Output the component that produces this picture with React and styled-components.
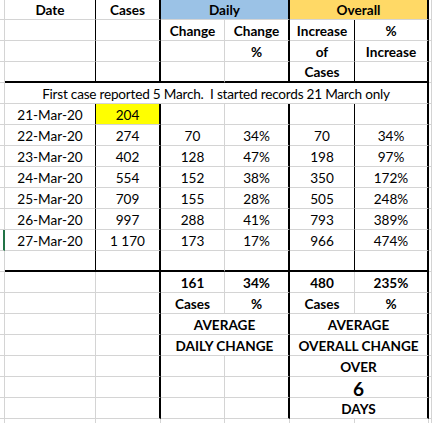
import React from 'react';
import styled, { createGlobalStyle } from 'styled-components';

// Sheet look

const GRID = '#d4d4d4';

const lines = {
    grid: `1px solid ${GRID}`,
    thin: '1px solid #000',
    thick: '2px solid #000',
    sel: '2px solid #217346',
    none: 'none',
};

const GlobalStyle = createGlobalStyle`
    html, body {
        margin: 0;
        padding: 0;
        background: #ffffff;
        overflow: hidden;
    }
`;

const Page = styled.div`
    width: 432px;
    height: 423px;
    overflow: hidden;
    background: #ffffff;
    font-family: Lato, "Liberation Sans", sans-serif;
    font-size: 13.6px;
    color: #000;
`;

const Sheet = styled.div`
    display: grid;
    grid-template-columns: 5px 91px 65px 64px 65px 65px 74px 3px;
    grid-auto-rows: 21px;
    margin-top: -1px;
`;

const Cell = styled.div`
    box-sizing: border-box;
    display: flex;
    justify-content: center;
    white-space: pre;
    overflow: visible;
    grid-column: span ${p => p.$span || 1};
    border-right: ${p => lines[p.$r || 'grid']};
    border-bottom: ${p => lines[p.$b || 'grid']};
    background: ${p => p.$bg || 'transparent'};
    font-weight: ${p => (p.$bold ? 700 : 400)};
    font-size: ${p => (p.$big ? '19px' : 'inherit')};
    letter-spacing: ${p => (p.$tight ? '-0.22px' : 'normal')};
    padding-top: ${p => (p.$big ? '0' : '1px')};
    align-items: ${p => (p.$big ? 'flex-start' : 'center')};
`;

const HEAD_R = ['grid', 'thin', 'thick', 'grid', 'thick', 'thin', 'thick', 'grid'];
const STAT_R = ['grid', 'grid', 'thick', 'grid', 'thick', 'grid', 'thick', 'grid'];

const days = [
    ['21-Mar-20', '204', '', '', '', ''],
    ['22-Mar-20', '274', '70', '34%', '70', '34%'],
    ['23-Mar-20', '402', '128', '47%', '198', '97%'],
    ['24-Mar-20', '554', '152', '38%', '350', '172%'],
    ['25-Mar-20', '709', '155', '28%', '505', '248%'],
    ['26-Mar-20', '997', '288', '41%', '793', '389%'],
    ['27-Mar-20', '1 170', '173', '17%', '966', '474%'],
    ['', '', '', '', '', ''],
];

function Row({ values, right = HEAD_R, bottom, bold, first, edge }) {
    return (
        <>
            <Cell $r={edge || 'grid'} />
            {values.map((v, i) => (
                <Cell key={i} $r={right[i + 1]} $b={bottom || 'grid'} $bold={bold}
                    $bg={first && i === 1 ? '#ffff00' : undefined}>
                    {v}
                </Cell>
            ))}
            <Cell />
        </>
    );
}

function App() {
    return (
        <Page>
            <GlobalStyle />
            <Sheet>
                {/* header */}
                <Cell />
                <Cell $r="thin" $bold>Date</Cell>
                <Cell $r="thick" $bold>Cases</Cell>
                <Cell $span={2} $r="thick" $bg="#9bc2e6" $bold>Daily</Cell>
                <Cell $span={2} $r="thick" $bg="#ffd966" $bold>Overall</Cell>
                <Cell />

                <Row values={['', '', 'Change', 'Change', 'Increase', '%']} bold />
                <Row values={['', '', '', '%', 'of', 'Increase']} bold />
                <Row values={['', '', '', '', 'Cases', '']} bold bottom="thick" />

                <Cell />
                <Cell $span={6} $r="thick" $tight>First case reported 5 March.  I started records 21 March only</Cell>
                <Cell />

                {days.map((d, i) => (
                    <Row key={i} values={d} first={i === 0}
                        edge={i === 6 ? 'sel' : undefined}
                        bottom={i === days.length - 1 ? 'thick' : undefined} />
                ))}

                <Row values={['', '', '161', '34%', '480', '235%']} right={STAT_R} bold />
                <Row values={['', '', 'Cases', '%', 'Cases', '%']} right={STAT_R} bold />

                <Cell />
                <Cell />
                <Cell $r="thick" />
                <Cell $span={2} $r="thick" $bold>AVERAGE</Cell>
                <Cell $span={2} $r="thick" $bold>AVERAGE</Cell>
                <Cell />

                <Cell />
                <Cell />
                <Cell $r="thick" />
                <Cell $span={2} $r="thick" $bold>DAILY CHANGE</Cell>
                <Cell $span={2} $r="thick" $bold>OVERALL CHANGE</Cell>
                <Cell />

                {['OVER', '6', 'DAYS'].map(t => (
                    <React.Fragment key={t}>
                        <Cell />
                        <Cell />
                        <Cell $r="thick" />
                        <Cell />
                        <Cell $r="thick" />
                        <Cell $span={2} $r="thick" $bold $big={t === '6'}>{t}</Cell>
                        <Cell />
                    </React.Fragment>
                ))}

                {Array.from({ length: 8 }).map((_, i) => <Cell key={i} />)}
            </Sheet>
        </Page>
    );
}

export default App;
